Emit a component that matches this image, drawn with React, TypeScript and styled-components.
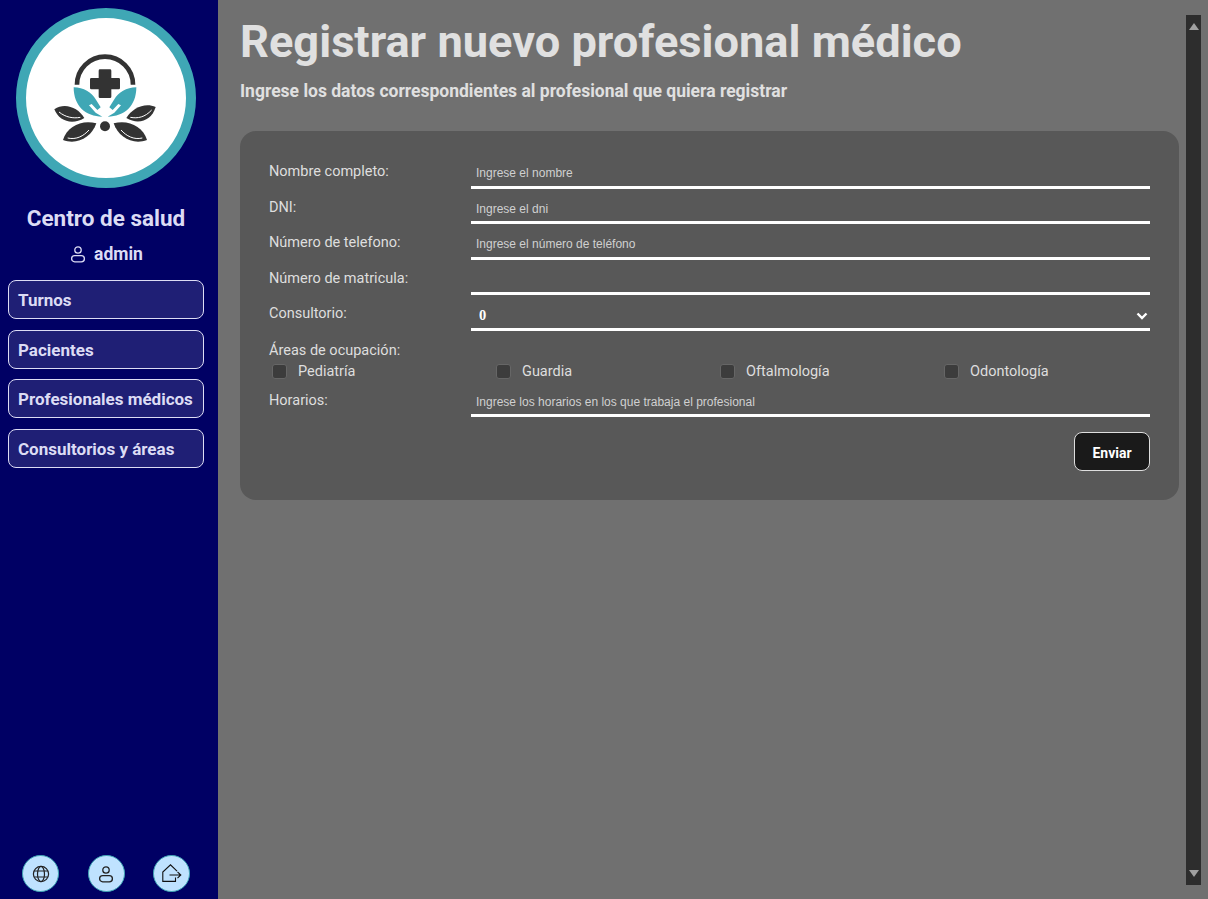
import React from "react"
import styled, { createGlobalStyle } from "styled-components"

const areas = ["Pediatría", "Guardia", "Oftalmología", "Odontología"]
const menu = ["Turnos", "Pacientes", "Profesionales médicos", "Consultorios y áreas"]

function Logo() {
  return (
    <svg width="115" height="105" viewBox="0 0 345 315">
      <path d="M84 116 A84 84 0 0 1 252 116" fill="none" stroke="#333" strokeWidth="14" />
      <path
        d="M153 70 h30 a4 4 0 0 1 4 4 v22 h22 a4 4 0 0 1 4 4 v26 a4 4 0 0 1 -4 4 h-22 v22 a4 4 0 0 1 -4 4 h-30 a4 4 0 0 1 -4 -4 v-22 h-22 a4 4 0 0 1 -4 -4 v-26 a4 4 0 0 1 4 -4 h22 v-22 a4 4 0 0 1 4 -4z"
        fill="#333"
      />
      <path
        d="M74 124 C104 124 128 140 140 160 L155 184 L145 192 L128 174 L120 178 L140 200 L160 212 C110 212 74 180 74 124z"
        fill="#3fa7b5"
      />
      <path
        d="M262 124 C232 124 208 140 196 160 L181 184 L191 192 L208 174 L216 178 L196 200 L176 212 C226 212 262 180 262 124z"
        fill="#3fa7b5"
      />
      <circle cx="168" cy="241" r="15" fill="#333" />
      <path d="M16 190 C48 168 88 186 106 216 C70 238 30 226 16 190z" fill="#333" />
      <path d="M320 183 C288 168 250 186 232 216 C268 238 308 224 320 183z" fill="#333" />
      <path d="M42 282 C54 240 100 220 142 232 C128 274 84 298 42 282z" fill="#333" />
      <path d="M294 282 C282 240 236 220 194 232 C208 274 252 298 294 282z" fill="#333" />
      <path d="M30 198 C50 214 72 218 94 214" fill="none" stroke="#fff" strokeWidth="3" />
      <path d="M308 192 C288 214 266 218 244 214" fill="none" stroke="#fff" strokeWidth="3" />
      <path d="M56 276 C82 282 104 270 120 252" fill="none" stroke="#fff" strokeWidth="3" />
      <path d="M280 276 C254 282 232 270 216 252" fill="none" stroke="#fff" strokeWidth="3" />
    </svg>
  )
}

function PersonIcon({ color = "#222" }: { color?: string }) {
  return (
    <svg width="18" height="18" viewBox="0 0 18 18" fill="none" stroke={color} strokeWidth="1.3">
      <circle cx="9" cy="5" r="3.2" />
      <rect x="2.6" y="10.6" width="12.8" height="6.2" rx="3.1" />
    </svg>
  )
}

function GlobeIcon() {
  return (
    <svg width="18" height="18" viewBox="0 0 18 18" fill="none" stroke="#222" strokeWidth="1.2">
      <circle cx="9" cy="9" r="7.6" />
      <ellipse cx="9" cy="9" rx="3.5" ry="7.6" />
      <path d="M2 6h14M2 12h14" />
    </svg>
  )
}

function HomeExitIcon() {
  return (
    <svg width="20" height="20" viewBox="0 0 20 20" fill="none" stroke="#111" strokeWidth="1.1">
      <path d="M15 7.2 8.5.8.8 8v9.4h12.7v-4" />
      <path d="M7.5 11h11M15.5 7.8 18.8 11l-3.3 3.2" />
    </svg>
  )
}

function ChevronIcon() {
  return (
    <svg width="12" height="8" viewBox="0 0 12 8" fill="none" stroke="white" strokeWidth="2.4">
      <path d="M1.5 1.5 6 6l4.5-4.5" />
    </svg>
  )
}

function App() {
  return (
    <Page>
      <GlobalStyle />
      <Sidebar>
        <LogoRing>
          <Logo />
        </LogoRing>
        <Brand>Centro de salud</Brand>
        <UserRow>
          <PersonIcon color="#dcdcf4" />
          admin
        </UserRow>
        <Menu>
          {menu.map((item) => (
            <MenuButton key={item}>{item}</MenuButton>
          ))}
        </Menu>
        <FooterIcons>
          <RoundButton>
            <GlobeIcon />
          </RoundButton>
          <RoundButton>
            <PersonIcon />
          </RoundButton>
          <RoundButton>
            <HomeExitIcon />
          </RoundButton>
        </FooterIcons>
      </Sidebar>
      <Content>
        <Title>Registrar nuevo profesional médico</Title>
        <Subtitle>Ingrese los datos correspondientes al profesional que quiera registrar</Subtitle>
        <Card>
          <Row>
            <Label>Nombre completo:</Label>
            <Input placeholder="Ingrese el nombre" />
          </Row>
          <Row>
            <Label>DNI:</Label>
            <Input placeholder="Ingrese el dni" />
          </Row>
          <Row>
            <Label>Número de telefono:</Label>
            <Input placeholder="Ingrese el número de teléfono" />
          </Row>
          <Row>
            <Label>Número de matricula:</Label>
            <Input />
          </Row>
          <Row>
            <Label>Consultorio:</Label>
            <SelectWrap>
              <Select defaultValue="0">
                <option value="0">0</option>
              </Select>
              <SelectArrow>
                <ChevronIcon />
              </SelectArrow>
            </SelectWrap>
          </Row>
          <AreasLabel>Áreas de ocupación:</AreasLabel>
          <AreasGrid>
            {areas.map((area) => (
              <AreaItem key={area}>
                <Check type="checkbox" />
                {area}
              </AreaItem>
            ))}
          </AreasGrid>
          <Row>
            <Label>Horarios:</Label>
            <Input placeholder="Ingrese los horarios en los que trabaja el profesional" />
          </Row>
          <Actions>
            <SendButton>Enviar</SendButton>
          </Actions>
        </Card>
      </Content>
      <ScrollTrack>
        <ArrowUp />
        <ArrowDown />
      </ScrollTrack>
    </Page>
  )
}

export default App

const GlobalStyle = createGlobalStyle`
  html, body {
    margin: 0;
    height: 100%;
    overflow: hidden;
    background: #707070;
  }
  * {
    box-sizing: border-box;
  }
`

const Page = styled.div`
  display: flex;
  height: 100vh;
  font-family: Roboto, "Noto Sans", sans-serif;
  background: #707070;
`

const Sidebar = styled.aside`
  display: flex;
  flex-direction: column;
  align-items: center;
  width: 218px;
  flex-shrink: 0;
  padding: 8px 14px 7px 8px;
  background: #000064;
  color: #dcdcf4;
`

const LogoRing = styled.div`
  display: flex;
  justify-content: center;
  align-items: center;
  width: 180px;
  height: 180px;
  border: 10px solid #3fa7b5;
  border-radius: 50%;
  background: white;
`

const Brand = styled.div`
  margin-top: 16px;
  font-size: 22.5px;
  line-height: 28px;
  font-weight: 700;
  white-space: nowrap;
`

const UserRow = styled.div`
  display: flex;
  align-items: center;
  gap: 7px;
  margin-top: 11px;
  font-size: 17.5px;
  line-height: 22px;
  font-weight: 700;
`

const Menu = styled.nav`
  display: flex;
  flex-direction: column;
  gap: 10.6px;
  width: 196px;
  margin-top: 15px;
`

const MenuButton = styled.div`
  display: flex;
  align-items: center;
  height: 39px;
  padding: 1px 0 0 9px;
  border: 1px solid #dcdcf4;
  border-radius: 8px;
  background: #1f1f75;
  font-size: 17px;
  font-weight: 700;
  white-space: nowrap;
`

const FooterIcons = styled.div`
  display: flex;
  justify-content: space-between;
  width: 168px;
  margin-top: auto;
`

const RoundButton = styled.div`
  display: flex;
  justify-content: center;
  align-items: center;
  width: 37px;
  height: 37px;
  border: 1px solid #3fa7b5;
  border-radius: 50%;
  background: #bfe2ff;
`

const Content = styled.main`
  flex: 1;
  min-width: 0;
  padding: 16px 7px 0 22px;
`

const Title = styled.h1`
  margin: 0;
  font-size: 45.2px;
  line-height: 52px;
  font-weight: 700;
  color: #e0e0e0;
  white-space: nowrap;
`

const Subtitle = styled.h2`
  margin: 12px 0 0;
  font-size: 17.5px;
  line-height: 22px;
  font-weight: 700;
  color: #e0e0e0;
  white-space: nowrap;
`

const Card = styled.form`
  display: flex;
  flex-direction: column;
  height: 369px;
  margin-top: 29px;
  padding: 22px 29px 0;
  border-radius: 16px;
  background: #585858;
`

const Row = styled.div`
  display: flex;
  height: 35.5px;
`

const Label = styled.label`
  width: 202px;
  flex-shrink: 0;
  padding-top: 10px;
  font-size: 14.5px;
  line-height: 18px;
  color: #dedede;
`

const Input = styled.input`
  flex: 1;
  min-width: 0;
  height: 35.5px;
  padding: 8px 5px 0;
  border: 0;
  border-bottom: 3px solid white;
  background: transparent;
  font-family: "Liberation Sans", Arial, sans-serif;
  font-size: 12px;
  color: white;
  outline: none;
  &::placeholder {
    color: #d0d0d0;
    opacity: 1;
  }
`

const SelectWrap = styled.div`
  position: relative;
  flex: 1;
`

const Select = styled.select`
  appearance: none;
  width: 100%;
  height: 35.5px;
  padding: 8px 8px 0;
  border: 0;
  border-bottom: 3px solid white;
  border-radius: 0;
  background: transparent;
  font-family: "Liberation Serif", serif;
  font-size: 14.5px;
  font-weight: 700;
  color: white;
  outline: none;
`

const SelectArrow = styled.span`
  position: absolute;
  right: 2px;
  top: 17px;
  display: flex;
`

const AreasLabel = styled.div`
  margin-top: 11px;
  font-size: 14.5px;
  line-height: 18px;
  color: #dedede;
`

const AreasGrid = styled.div`
  display: grid;
  grid-template-columns: repeat(4, 224px);
  margin-top: 1px;
  padding-left: 3px;
`

const AreaItem = styled.label`
  display: flex;
  align-items: center;
  gap: 11px;
  height: 21px;
  font-size: 14.5px;
  color: #dedede;
`

const Check = styled.input`
  appearance: none;
  width: 15px;
  height: 15px;
  margin: 0;
  border: 1px solid #666;
  border-radius: 3px;
  background: #3c3c3c;
`

const Actions = styled.div`
  display: flex;
  justify-content: flex-end;
  margin-top: 15px;
`

const SendButton = styled.button`
  width: 76px;
  height: 39px;
  padding-top: 4px;
  border: 1px solid #dedede;
  border-radius: 8px;
  background: #1a1a1a;
  font-family: Roboto, sans-serif;
  font-size: 14px;
  font-weight: 700;
  color: white;
`

const ScrollTrack = styled.div`
  display: flex;
  flex-direction: column;
  justify-content: space-between;
  align-items: center;
  width: 15px;
  flex-shrink: 0;
  height: 870px;
  margin: 15px 7px 0 0;
  padding: 8px 0;
  background: #2d2d2d;
`

const ArrowUp = styled.div`
  width: 0;
  height: 0;
  border-left: 5px solid transparent;
  border-right: 5px solid transparent;
  border-bottom: 7px solid #a0a0a0;
`

const ArrowDown = styled.div`
  width: 0;
  height: 0;
  border-left: 5px solid transparent;
  border-right: 5px solid transparent;
  border-top: 7px solid #a0a0a0;
`
